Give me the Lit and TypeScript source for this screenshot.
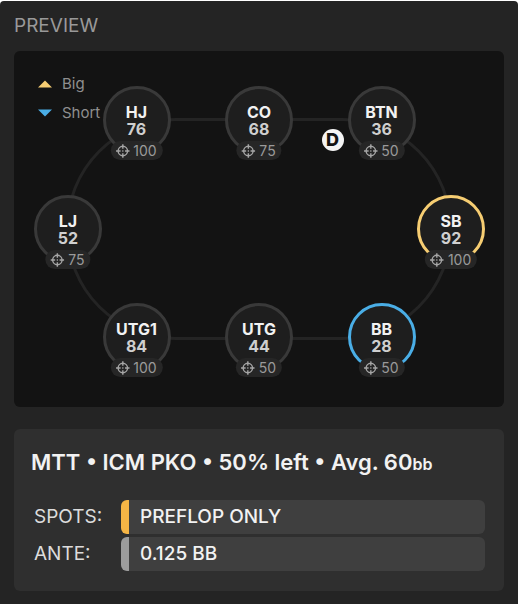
import { LitElement, html, css, svg } from "lit";
import { customElement, property } from "lit/decorators.js";
import { classMap } from "lit/directives/class-map.js";
import { styleMap } from "lit/directives/style-map.js";

type Stack = "normal" | "big" | "short";

interface Seat {
  position: string;
  stack: number;
  bounty: number;
  x: number;
  y: number;
  size?: Stack;
}

// Seat centres, in percent of the table area.
const SEATS: Seat[] = [
  { position: "HJ", stack: 76, bounty: 100, x: 25, y: 19.4 },
  { position: "CO", stack: 68, bounty: 75, x: 50, y: 19.4 },
  { position: "BTN", stack: 36, bounty: 50, x: 75, y: 19.4 },
  { position: "LJ", stack: 52, bounty: 75, x: 11, y: 50 },
  { position: "SB", stack: 92, bounty: 100, x: 89.2, y: 50, size: "big" },
  { position: "UTG1", stack: 84, bounty: 100, x: 25, y: 80.4 },
  { position: "UTG", stack: 44, bounty: 50, x: 50, y: 80.4 },
  { position: "BB", stack: 28, bounty: 50, x: 75, y: 80.4, size: "short" },
];

const crosshair = svg`
  <circle cx="7" cy="7" r="4.7" />
  <path d="M7 0.2V4.8M7 9.2v4.6M0.2 7H4.8M9.2 7h4.6M6.4 7h1.2" />
`;

@customElement("table-seat")
export class TableSeat extends LitElement {
  @property({ attribute: false }) seat!: Seat;

  static styles = css`
    :host {
      display: block;
    }
    .seat {
      position: relative;
      box-sizing: border-box;
      width: 68px;
      height: 68px;
      padding-top: 15px;
      border: 3px solid #393939;
      border-radius: 50%;
      background: #1e1e1e;
      text-align: center;
      font-size: 16px;
      font-weight: 700;
      line-height: 17px;
      color: #f2f2f2;
    }
    .seat.big {
      border-color: #f6cd72;
    }
    .seat.short {
      border-color: #4aaee6;
    }
    .stack {
      color: #cfcfcf;
    }
    .bounty {
      position: absolute;
      top: 100%;
      left: 50%;
      transform: translate(-50%, -10px);
      display: flex;
      align-items: center;
      gap: 4px;
      height: 19px;
      padding: 0 6px 0 5px;
      border-radius: 10px;
      background: #262626;
      font-size: 14px;
      font-weight: 400;
      color: #9a9a9a;
    }
    .icon {
      width: 14px;
      height: 14px;
      fill: none;
      stroke: #a6a6a6;
      stroke-width: 1.4;
    }
  `;

  render() {
    const { position, stack, bounty, size } = this.seat;
    return html`
      <div class=${classMap({ seat: true, big: size === "big", short: size === "short" })}>
        <div>${position}</div>
        <div class="stack">${stack}</div>
        <div class="bounty">
          <svg class="icon" viewBox="0 0 14 14" aria-hidden="true">${crosshair}</svg>
          <span>${bounty}</span>
        </div>
      </div>
    `;
  }
}

@customElement("app-root")
export class AppRoot extends LitElement {
  static styles = css`
    :host {
      display: block;
      padding-top: 1px;
      background: #fff;
      font-family: Inter, "Liberation Sans", sans-serif;
    }
    .panel {
      box-sizing: border-box;
      min-height: calc(100vh - 1px);
      padding: 13px 14px;
      border-radius: 4px 4px 0 0;
      background: #242424;
    }
    .heading {
      margin: 0 0 13px;
      font-size: 19px;
      font-weight: 400;
      line-height: 24px;
      color: #999;
    }
    .table {
      position: relative;
      box-sizing: border-box;
      height: 356px;
      padding: 21px 24px;
      border-radius: 6px;
      background: #131313;
    }
    .legend {
      display: grid;
      gap: 5px;
      margin: 0;
      padding: 0;
      list-style: none;
      font-size: 15px;
      line-height: 24px;
      color: #8f8f8f;
    }
    .legend li {
      display: flex;
      align-items: center;
      gap: 10px;
    }
    .marker {
      width: 14px;
      height: 8px;
    }
    .up {
      fill: #f6cd72;
    }
    .down {
      fill: #4aaee6;
    }
    .track {
      position: absolute;
      inset: 18.7% 10.6%;
      border: 3px solid #242424;
      border-radius: 110px;
    }
    .place {
      position: absolute;
      transform: translate(-50%, -50%);
    }
    .dealer {
      position: absolute;
      left: 65%;
      top: 25%;
      transform: translate(-50%, -50%);
      width: 22px;
      height: 22px;
      border-radius: 50%;
      background: #f4f4f4;
      text-align: center;
      font-size: 18px;
      font-weight: 800;
      line-height: 22px;
      color: #131313;
    }
    .info {
      margin-top: 22px;
      padding: 19px 19px 20px 17px;
      border-radius: 6px;
      background: #2f2f2f;
      color: #f2f2f2;
    }
    .title {
      margin: 0 0 22px;
      font-size: 22px;
      font-weight: 600;
      line-height: 28px;
    }
    .unit {
      font-size: 16px;
    }
    .facts {
      display: grid;
      grid-template-columns: 87px 1fr;
      gap: 3px 0;
      margin: 0;
      padding-left: 3px;
      font-size: 19px;
      line-height: 34px;
    }
    .facts dt {
      color: #dcdcdc;
    }
    .facts dd {
      margin: 0;
      padding-left: 11px;
      border-left: 8px solid #9c9c9c;
      border-radius: 6px;
      background: #3f3f3f;
      font-weight: 500;
    }
    .facts dd.accent {
      border-left-color: #f6b545;
    }
  `;

  render() {
    return html`
      <main class="panel">
        <h1 class="heading">PREVIEW</h1>
        <section class="table" aria-label="Table">
          <div class="track"></div>
          <ul class="legend">
            <li>
              <svg class="marker up" viewBox="0 0 14 8" aria-hidden="true"><path d="M0 7.5 7 0.5l7 7z" /></svg>
              Big
            </li>
            <li>
              <svg class="marker down" viewBox="0 0 14 8" aria-hidden="true"><path d="M0 0.5h14l-7 7z" /></svg>
              Short
            </li>
          </ul>
          ${SEATS.map(
            (seat) => html`
              <table-seat
                class="place"
                .seat=${seat}
                style=${styleMap({ left: `${seat.x}%`, top: `${seat.y}%` })}
              ></table-seat>
            `
          )}
          <div class="dealer">D</div>
        </section>
        <section class="info">
          <h2 class="title">MTT • ICM PKO • 50% left • Avg. 60<span class="unit">bb</span></h2>
          <dl class="facts">
            <dt>SPOTS:</dt>
            <dd class="accent">PREFLOP ONLY</dd>
            <dt>ANTE:</dt>
            <dd>0.125 BB</dd>
          </dl>
        </section>
      </main>
    `;
  }
}
